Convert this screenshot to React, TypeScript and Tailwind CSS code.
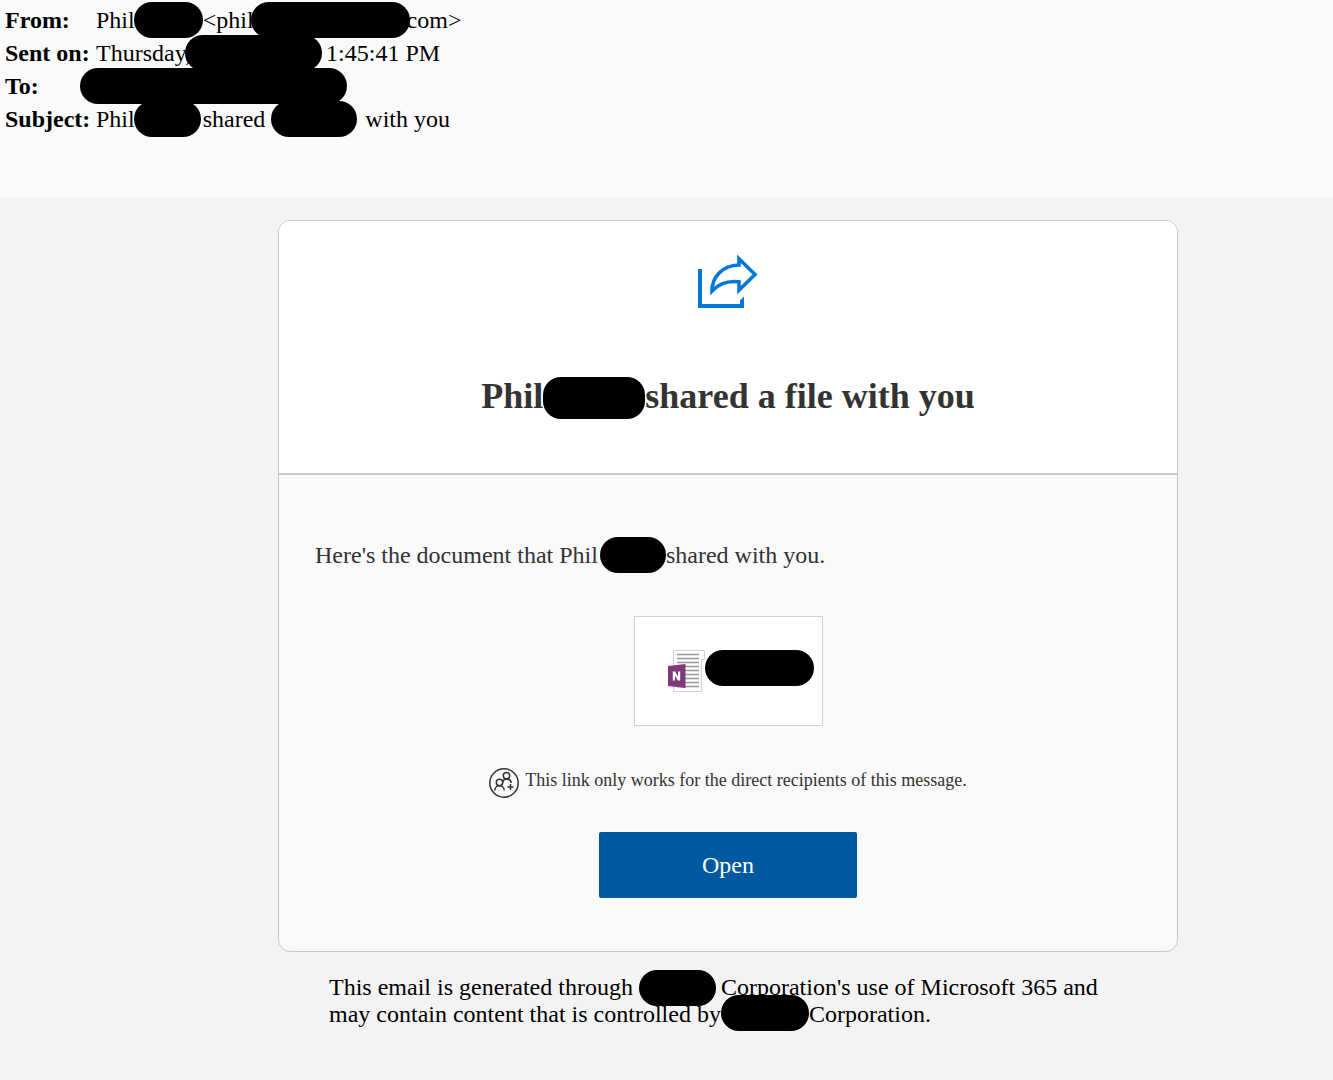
import React from 'react';

interface RedactedProps {
  className?: string;
}

const Redacted: React.FC<RedactedProps> = ({ className = '' }) => (
  <span className={`relative inline-block shrink-0 rounded-[18px] bg-black ${className}`} />
);

interface HeaderRowProps {
  label: string;
  children: React.ReactNode;
}

const HeaderRow: React.FC<HeaderRowProps> = ({ label, children }) => (
  <div className="flex h-[33px] items-center">
    <dt className="w-[91px] shrink-0 font-bold">{label}</dt>
    <dd className="flex items-center whitespace-pre">{children}</dd>
  </div>
);

const ShareIcon = () => (
  <svg className="block h-[54px] w-[60px]" viewBox="0 0 60 54" fill="none" stroke="#0078d7" strokeWidth="4">
    <path d="M2 15V52H44V46" />
    <path d="M46 42.500V54H42V46.500Z" fill="#0078d7" stroke="none" />
    <path
      d="M41 4.800L57 20.500L41 36.200V27.800C30 26.500 21 29.500 14 37C14 23 24 11.500 41 11Z"
      strokeWidth="3.600"
    />
  </svg>
);

const OneNoteIcon = () => (
  <svg className="block h-[42px] w-[37px]" viewBox="0 0 37 42" fill="none">
    <path d="M5.500 .5H36.500V9.500H33.500V41.500H5.500Z" fill="#fff" stroke="#d2d2d2" />
    <path
      d="M9 4.500H31M9 8.500H31M9 12.500H31M9 16.500H31M9 20.500H31M9 24.500H31M9 28.500H31M9 32.500H31M9 36.500H31"
      stroke="#999"
      strokeWidth="1.300"
    />
    <path d="M0 16L17.500 14V38L0 36Z" fill="#80397b" />
    <path d="M4.800 30.500V21.500H7.200L10 26.700V21.500H12.200V30.500H9.800L7 25.300V30.500Z" fill="#fff" />
  </svg>
);

const PeopleIcon = () => (
  <svg className="block h-[30px] w-[30px] shrink-0" viewBox="0 0 30 30" fill="none" stroke="#333" strokeWidth="1.500">
    <circle cx="15" cy="15" r="14.200" />
    <circle cx="10.500" cy="14.500" r="3.200" />
    <circle cx="17.500" cy="7.800" r="3.200" />
    <path d="M5.800 22.500C5.800 19.500 8 17.800 10.500 17.800S15.200 19.500 15.200 22.500" />
    <path d="M13.600 14.500C14 12.200 15.500 11 17.500 11C20 11 22 12.500 22.200 15" />
    <path d="M21.500 16V22M18.500 19H24.500" />
  </svg>
);

const App: React.FC = () => {
  return (
    <div className="min-h-screen bg-[#f3f3f3] font-['Liberation_Serif',serif] text-2xl text-black">
      <header className="bg-[#fafafa] pt-[3px] pb-[62px] pl-[5px]">
        <dl>
          <HeaderRow label="From:">
            Phil
            <Redacted className="-ml-px h-9 w-[69px]" />
            {'<phil'}
            <Redacted className="-mx-[3px] h-9 w-[159px]" />
            {'com>'}
          </HeaderRow>
          <HeaderRow label="Sent on:">
            Thursday,
            <Redacted className="-ml-1.5 mr-1 h-9 w-[137px]" />
            1:45:41 PM
          </HeaderRow>
          <HeaderRow label="To:">
            <Redacted className="-ml-4 h-9 w-[267px]" />
          </HeaderRow>
          <HeaderRow label="Subject:">
            Phil
            <Redacted className="-ml-px mr-[2px] h-9 w-[67px]" />
            {'shared '}
            <Redacted className="mr-2 h-9 w-[86px]" />
            with you
          </HeaderRow>
        </dl>
      </header>

      <main className="pt-[23px] pl-[123px]">
        <div className="mx-auto max-w-[900px]">
          <article className="overflow-hidden rounded-xl border border-[#c8c8c8] bg-[#f9f9f9] text-[#333]">
            <div className="flex flex-col items-center border-b-2 border-[#c8c8c8] bg-white pt-[33px] pb-14">
              <ShareIcon />
              <h1 className="mt-[67px] flex h-[42px] items-center text-4xl font-bold">
                Phil
                <Redacted className="mt-1 h-[42px] w-[102px]" />
                shared a file with you
              </h1>
            </div>

            <div className="flex flex-col items-center pt-[62px] pb-[53px]">
              <p className="flex w-full items-center px-9">
                Here's the document that Phil
                <Redacted className="ml-[2px] h-9 w-[66px]" />
                shared with you.
              </p>

              <div className="mt-[43px] flex h-[110px] items-center border border-[#d2d2d2] bg-white pr-2 pl-[33px]">
                <OneNoteIcon />
                <Redacted className="mb-1.5 h-9 w-[109px]" />
              </div>

              <div className="mt-[42px] flex gap-1.5 text-lg leading-6">
                <PeopleIcon />
                <p>This link only works for the direct recipients of this message.</p>
              </div>

              <button type="button" className="mt-[34px] h-[66px] w-[258px] rounded-xs bg-[#00589f] text-white">
                Open
              </button>
            </div>
          </article>

          <footer className="px-[51px] pt-[22px] leading-[27px]">
            <p className="flex h-[27px] items-center whitespace-pre">
              {'This email is generated through '}
              <Redacted className="mr-[5px] h-9 w-[77px]" />
              Corporation's use of Microsoft 365 and
            </p>
            <p className="flex h-[27px] items-center whitespace-pre">
              may contain content that is controlled by
              <Redacted className="mb-1 h-9 w-[88px]" />
              Corporation.
            </p>
          </footer>
        </div>
      </main>
    </div>
  );
};

export default App;
